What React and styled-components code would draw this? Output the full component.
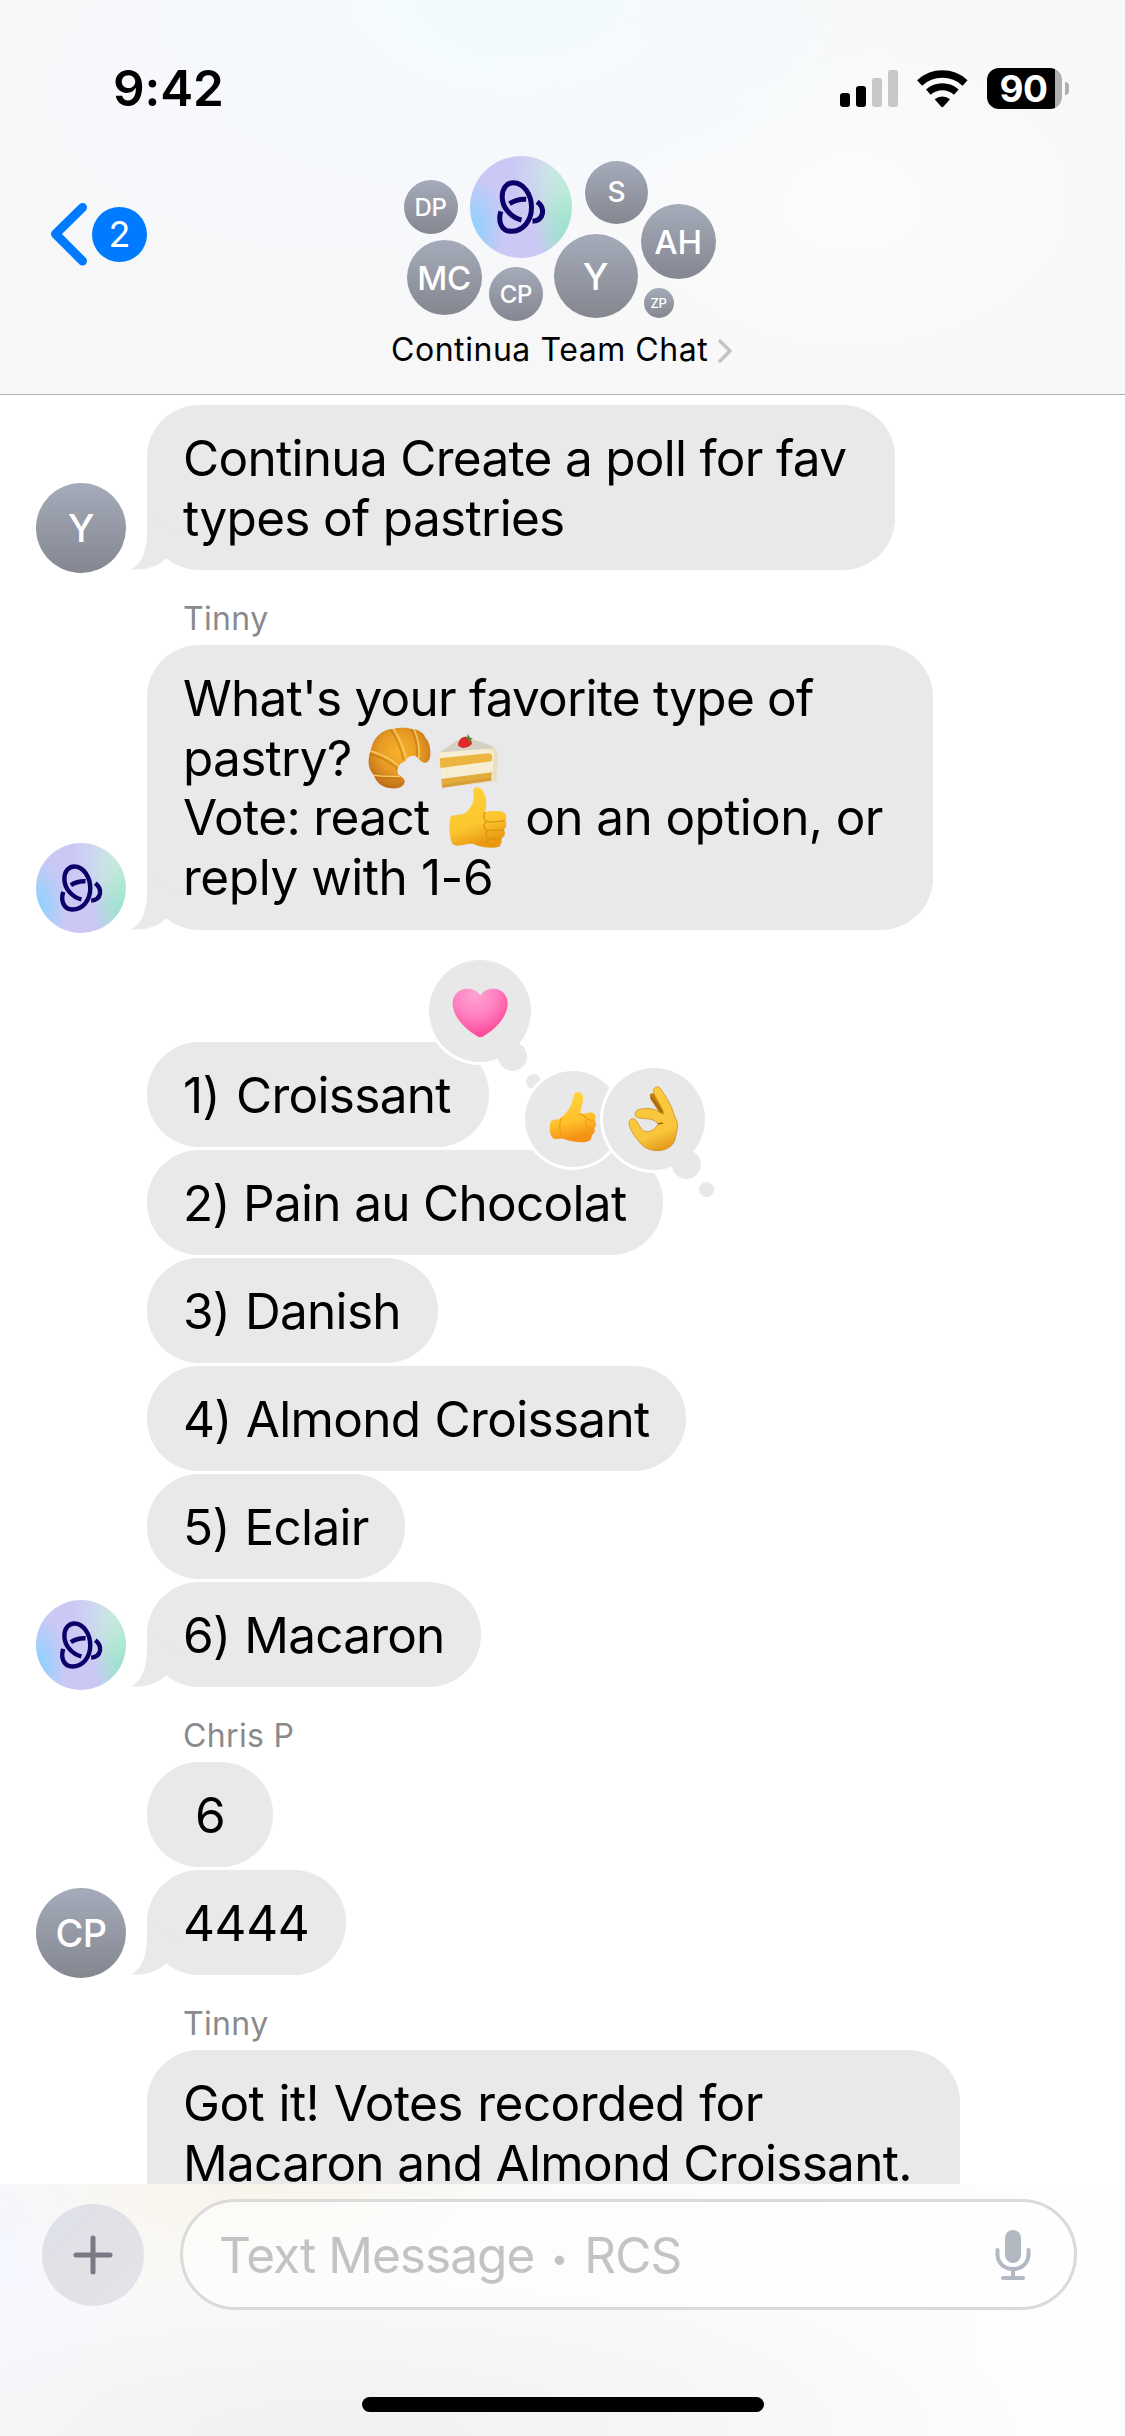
import React from "react";
import styled, { createGlobalStyle } from "styled-components";

const GlobalStyle = createGlobalStyle`
  body { margin: 0; background: #fff; }
  * { box-sizing: border-box; }
`;

const Screen = styled.div`
  width: 1125px;
  height: 2436px;
  display: flex;
  flex-direction: column;
  overflow: hidden;
  background: #fff;
  color: #000;
  font-family: Inter, "Liberation Sans", sans-serif;
`;

/* ---------- header ---------- */

const Header = styled.header`
  flex: none;
  height: 395px;
  border-bottom: 1px solid #b0b0b2;
  background:
    radial-gradient(ellipse 420px 230px at 520px 0, #f3fbff 0%, rgba(243, 251, 255, 0) 100%),
    radial-gradient(ellipse 520px 300px at 330px 90px, #f7f9fe 0%, rgba(247, 249, 254, 0) 100%),
    radial-gradient(ellipse 360px 240px at 850px 200px, #fcfcfc 0%, rgba(252, 252, 252, 0) 100%),
    #f7f7f7;
`;

const StatusBar = styled.div`
  height: 142px;
  display: flex;
  justify-content: space-between;
  padding: 0 56px 0 113px;
`;

const Clock = styled.div`
  padding-top: 58px;
  font-size: 49.5px;
  line-height: 60px;
  font-weight: 600;
  letter-spacing: -0.1px;
`;

const StatusIcons = styled.div`
  display: flex;
  align-items: flex-start;
  padding-top: 68px;
`;

const SignalBars = styled.div`
  display: flex;
  align-items: flex-end;
  gap: 6px;
  height: 39px;
  margin-right: 17px;
`;

const Bar = styled.div`
  width: 10px;
  height: ${(p) => p.$h}px;
  border-radius: 3px;
  background: ${(p) => (p.$on ? "#000" : "#c6c7c9")};
`;

const WifiSvg = styled.svg`
  width: 55px;
  height: 43px;
  margin: -1px 17px 0 0;
`;

const Battery = styled.div`
  width: 75px;
  height: 41px;
  border-radius: 12px;
  background: linear-gradient(90deg, #000 68px, #afafb0 68px);
  color: #fff;
  font-size: 37px;
  line-height: 41px;
  font-weight: 700;
  letter-spacing: -0.6px;
  text-align: center;
  padding-right: 2px;
`;

const BatteryNub = styled.div`
  width: 4px;
  height: 13px;
  margin: 14px 0 0 3px;
  border-radius: 0 6px 6px 0;
  background: #afafb0;
`;

const NavRow = styled.div`
  display: grid;
  grid-template-columns: 390px 345px 390px;
`;

const BackButton = styled.div`
  display: flex;
  align-items: center;
  height: 70px;
  margin-top: 57px;
  padding-left: 48px;
`;

const BackChevron = styled.svg`
  width: 43px;
  height: 70px;
  margin-right: 1px;
`;

const UnreadBadge = styled.div`
  width: 55px;
  height: 55px;
  border-radius: 50%;
  background: #007aff;
  color: #fff;
  font-size: 36px;
  line-height: 55px;
  text-align: center;
`;

const GroupInfo = styled.div`
  display: flex;
  flex-direction: column;
`;

const AvatarCluster = styled.div`
  position: relative;
  height: 186px;
`;

const initialsFill = "linear-gradient(180deg, #a5abba 0%, #848790 100%)";
const logoFill = `
  radial-gradient(ellipse 34% 45% at 98% 78%, rgba(150, 225, 205, 0.9), rgba(160, 228, 208, 0)),
  radial-gradient(ellipse 42% 60% at 102% 50%, #b4f0cc, rgba(190, 240, 212, 0)),
  radial-gradient(ellipse 45% 60% at 85% 15%, #cfe6ea, rgba(207, 230, 234, 0)),
  radial-gradient(ellipse 32% 55% at 2% 72%, #8cd2ff, rgba(150, 210, 252, 0)),
  #cbc8f5
`;

const ClusterAvatar = styled.div`
  position: absolute;
  left: ${(p) => p.$x - 390 - p.$d / 2}px;
  top: ${(p) => p.$y - 142 - p.$d / 2}px;
  width: ${(p) => p.$d}px;
  height: ${(p) => p.$d}px;
  border-radius: 50%;
  display: flex;
  align-items: center;
  justify-content: center;
  background: ${(p) => (p.$logo ? logoFill : initialsFill)};
  color: #fff;
  font-size: ${(p) => p.$fs}px;
  font-weight: 500;
  letter-spacing: -0.3px;
`;

const GroupTitle = styled.div`
  display: flex;
  align-items: center;
  height: 40px;
  margin-top: 1px;
  padding-left: 1px;
  font-size: 32px;
  letter-spacing: 0.55px;
  white-space: nowrap;
`;

const TitleChevron = styled.svg`
  width: 16px;
  height: 26px;
  margin: 3px 0 0 9px;
`;

/* ---------- conversation ---------- */

const Thread = styled.main`
  flex: none;
  height: 1789px;
  overflow: hidden;
  padding-top: 10px;
`;

const Group = styled.section`
  display: flex;
  flex-direction: column;
  gap: 3px;
  padding-left: 36px;
  margin-top: ${(p) => p.$gap || 0}px;
`;

const Sender = styled.div`
  height: 75px;
  padding: 29px 0 0 183px;
  font-size: 32px;
  line-height: 40px;
  letter-spacing: 0.35px;
  color: #8a8a8d;
`;

const Row = styled.div`
  display: flex;
  align-items: flex-end;
`;

const AvatarSlot = styled.div`
  flex: none;
  width: 111px;
  height: 90px;
  margin: 0 0 -3px;
`;

const Avatar = styled.div`
  width: 90px;
  height: 90px;
  border-radius: 50%;
  display: flex;
  align-items: center;
  justify-content: center;
  background: ${(p) => (p.$logo ? logoFill : initialsFill)};
  color: #fff;
  font-size: 38px;
  font-weight: 500;
  letter-spacing: -0.5px;
`;

const Bubble = styled.div`
  position: relative;
  flex: none;
  width: ${(p) => p.$w}px;
  padding: 22.5px 0 ${(p) => (p.$continues ? 90 : 22.5)}px ${(p) => (p.$center ? 0 : 36)}px;
  border-radius: 52px;
  background: #e9e9eb;
  font-size: 49.5px;
  line-height: 60px;
  text-align: ${(p) => (p.$center ? "center" : "left")};
`;

const Line = styled.div`
  height: ${(p) => p.$h || 60}px;
  white-space: nowrap;
  letter-spacing: ${(p) => p.$ls ?? -0.7}px;
  word-spacing: ${(p) => p.$ws || 0}px;
`;

const TailSvg = styled.svg`
  position: absolute;
  left: -18px;
  bottom: 0;
  width: 54px;
  height: 54px;
`;

const InlineEmoji = styled.svg`
  width: 69px;
  height: 69px;
  margin: -10px 0;
  vertical-align: -7px;
`;

const Reaction = styled.div`
  position: absolute;
  z-index: ${(p) => p.$z || 1};
  left: ${(p) => p.$x}px;
  top: ${(p) => p.$y}px;
  width: ${(p) => p.$d}px;
  height: ${(p) => p.$d}px;
  border-radius: 50%;
  background: #e8e8e8;
  box-shadow: 0 0 0 3px #fff;
`;

const ReactionEmoji = styled.svg`
  position: relative;
  display: block;
  width: 100%;
  height: 100%;
`;

const Dot = styled.div`
  position: absolute;
  left: ${(p) => p.$x}px;
  top: ${(p) => p.$y}px;
  width: ${(p) => p.$d}px;
  height: ${(p) => p.$d}px;
  border-radius: 50%;
  background: #e8e8e8;
`;

/* ---------- composer ---------- */

const Composer = styled.footer`
  flex: none;
  height: 252px;
  display: flex;
  flex-direction: column;
  align-items: center;
  background:
    radial-gradient(ellipse 300px 130px at 250px 0, #f8f4ea 0%, rgba(248, 244, 234, 0) 100%),
    radial-gradient(ellipse 150px 230px at 0 50px, #f5f7ff 0%, rgba(246, 247, 255, 0) 100%),
    radial-gradient(ellipse 700px 190px at 330px 252px, #f1f1f1 0%, rgba(243, 243, 243, 0) 100%),
    linear-gradient(90deg, #fbfbfc 0%, #fbfbfb 60%, #fefefe 100%);
`;

const InputRow = styled.div`
  width: 100%;
  display: flex;
  align-items: center;
  gap: 36px;
  padding: 15px 48px 0 42px;
`;

const PlusButton = styled.div`
  width: 102px;
  height: 102px;
  border-radius: 50%;
  background: linear-gradient(135deg, #dddfea 0%, #e2e2e6 50%, #e3e3e8 100%);
  display: flex;
  align-items: center;
  justify-content: center;
`;

const Field = styled.div`
  flex: 1;
  height: 111px;
  border: 3px solid #dadada;
  border-radius: 56px;
  background: rgba(255, 255, 255, 0.6);
  display: flex;
  align-items: center;
  justify-content: space-between;
  padding: 0 43px 0 36px;
`;

const Placeholder = styled.span`
  font-size: 49.5px;
  line-height: 60px;
  letter-spacing: -0.95px;
  color: #c3c3c5;
  white-space: pre;
`;

const Bullet = styled.span`
  display: inline-block;
  width: 24px;
  font-size: 30px;
  line-height: 30px;
  letter-spacing: 0;
  text-align: center;
  vertical-align: 4px;
`;

const HomeIndicator = styled.div`
  width: 402px;
  height: 15px;
  margin-top: 87px;
  border-radius: 8px;
  background: #000;
`;

/* ---------- drawings ---------- */

const Knot = () => (
  <svg width="100%" height="100%" viewBox="-46.5 -42 306 306" fill="none" stroke="#0c0069" strokeWidth="15">
    <path d="M108 150C78 143 50 114 50 80C50 55 64 38 84 38C115 38 138 75 138 112C138 152 113 184 77 184C50 184 36 158 46 124" />
    <path d="M72 101C88 91 105 87 122 88" />
    <path d="M155 95C167 104 173 117 171 130C168 146 156 153 141 154" />
  </svg>
);

const Wifi = () => (
  <WifiSvg viewBox="285 20 165 129">
    <g fill="none" stroke="#000">
      <path d="M298.8 67.9A100 100 0 0 1 435.2 67.9" strokeWidth="22" />
      <path d="M325 95.5A62.5 62.5 0 0 1 409 95.5" strokeWidth="21" />
    </g>
    <path d="M344 117A36 36 0 0 1 390 117L370 139.500Q367 142 364 139.500Z" />
  </WifiSvg>
);

const Tail = () => (
  <TailSvg viewBox="0 0 54 54" fill="#e9e9eb">
    <path d="M18 0V16C18 34 13 48 2 53.500C16 54.500 28 51 37.500 42L50 20Z" />
  </TailSvg>
);

const Croissant = () => (
  <InlineEmoji viewBox="1021 934 193 193">
    <defs>
      <radialGradient id="crust" cx="0.5" cy="0.4" r="0.62">
        <stop offset="0" stopColor="#f8b32b" />
        <stop offset="0.55" stopColor="#e59a24" />
        <stop offset="1" stopColor="#bd6c18" />
      </radialGradient>
      <clipPath id="crustClip">
        <path id="crustShape" d="M1031 1040C1031 1020 1038 1006 1040 996C1048 966 1078 946 1100 948C1112 944 1140 942 1156 949C1172 950 1186 960 1190 972C1202 984 1206 1008 1203 1028C1200 1040 1192 1044 1186 1042C1176 1041 1171 1028 1160 1023C1146 1022 1136 1030 1134 1038C1120 1042 1111 1052 1112 1068C1112 1080 1133 1080 1132 1097C1127 1114 1106 1116 1089 1113C1066 1110 1052 1096 1046 1078C1036 1066 1031 1056 1031 1040Z" />
      </clipPath>
    </defs>
    <use href="#crustShape" fill="url(#crust)" />
    <g clipPath="url(#crustClip)" fill="none">
      <g stroke="#b7660f" strokeWidth="5" opacity="0.45">
        <path d="M1031 1018Q1075 1025 1112 1060M1040 1086Q1080 1080 1118 1088M1092 950Q1118 985 1128 1034M1150 948Q1170 985 1166 1026" />
      </g>
      <g stroke="#f6cd62" strokeWidth="4">
        <path d="M1031 1008Q1080 1020 1114 1050M1040 1077Q1080 1082 1118 1080M1099 944Q1126 985 1138 1036M1156 944Q1176 985 1171 1030" />
      </g>
    </g>
  </InlineEmoji>
);

const Cake = () => (
  <InlineEmoji viewBox="1214 934 193 193">
    <path d="M1229 1014L1292 972Q1330 976 1378 996Q1393 1005 1393 1022L1389 1090Q1388 1096 1378 1097L1237 1112Z" fill="#e8dfc0" />
    <path d="M1229 1014L1292 972Q1335 978 1380 998Q1372 1007 1340 1010Z" fill="#d3d0c4" />
    <path d="M1229 1014L1350 1004Q1380 1002 1381 1014L1378 1092L1236 1112Z" fill="#f6edd3" />
    <path d="M1230 1030L1366 1016Q1377 1016 1377 1026L1375 1038L1232 1057Z" fill="#ebb540" />
    <path d="M1234 1088L1376 1069L1374 1091L1237 1112Z" fill="#e2ab3c" />
    <path d="M1237 1104L1375 1084L1374 1092L1237 1112Z" fill="#d79f3b" />
    <path d="M1284 982Q1290 970 1304 970Q1320 976 1320 990Q1312 1000 1296 1001Q1280 998 1281 990Z" fill="#e0292b" />
    <path d="M1300 968L1307 971L1309 961L1314 972L1323 975L1315 978L1317 990L1308 977Z" fill="#4c8a2b" />
  </InlineEmoji>
);

const ThumbInline = () => (
  <InlineEmoji viewBox="1244 1100 193 193">
    <defs>
      <linearGradient id="skin" x1="0" y1="0" x2="0.3" y2="1">
        <stop offset="0" stopColor="#ffd23d" />
        <stop offset="0.7" stopColor="#fcc52f" />
        <stop offset="1" stopColor="#e99a12" />
      </linearGradient>
    </defs>
    <path
      d="M1329 1128C1325 1112 1342 1107 1352 1118C1367 1134 1367 1160 1362 1182C1370 1178 1395 1177 1408 1180C1423 1184 1424 1198 1418 1205C1424 1214 1421 1226 1414 1230C1421 1240 1416 1252 1407 1255C1411 1268 1404 1280 1386 1281C1360 1281 1345 1277 1331 1271C1310 1266 1285 1284 1270 1270C1261 1250 1260 1214 1265 1195C1275 1185 1298 1194 1311 1180C1328 1163 1332 1146 1329 1128Z"
      fill="url(#skin)"
    />
    <path
      d="M1362 1182Q1354 1192 1361 1203Q1366 1210 1381 1209L1416 1206M1364 1209Q1354 1220 1364 1231Q1370 1234 1412 1231M1368 1234Q1360 1244 1368 1254Q1374 1257 1406 1256M1372 1257Q1366 1266 1372 1272Q1380 1276 1402 1276"
      fill="none"
      stroke="#dc9413"
      strokeWidth="3.500"
      strokeLinecap="round"
    />
  </InlineEmoji>
);

const HeartReaction = () => (
  <ReactionEmoji viewBox="87 60 306 306">
    <defs>
      <radialGradient id="pink" gradientUnits="userSpaceOnUse" cx="225" cy="165" r="125">
        <stop offset="0" stopColor="#ffa3d3" />
        <stop offset="0.5" stopColor="#ff82c1" />
        <stop offset="1" stopColor="#fd4896" />
      </radialGradient>
    </defs>
    <path
      d="M241 166C231 151 217 146 201 146C176 146 158 166 158 190C158 232 196 267 232 289Q241 295 250 289C286 267 323 232 323 190C323 166 306 146 281 146C265 146 251 151 241 166Z"
      fill="url(#pink)"
    />
  </ReactionEmoji>
);

const ThumbReaction = () => (
  <ReactionEmoji viewBox="375 393 288 288">
    <defs>
      <linearGradient id="skinB" x1="0" y1="0" x2="0.2" y2="1">
        <stop offset="0" stopColor="#ffd73c" />
        <stop offset="0.65" stopColor="#ffc12a" />
        <stop offset="1" stopColor="#f58f16" />
      </linearGradient>
    </defs>
    <path
      d="M522 464C528 452 544 455 548 467C552 484 543 502 540 521C552 524 563 515 577 518C588 521 591 534 582 541C592 547 589 561 582 565C587 573 583 582 575 584C577 596 569 605 556 606C536 608 508 604 490 596C478 594 464 602 456 592C448 580 447 556 453 544C461 534 474 543 483 533C498 520 506 510 512 497C518 486 518 476 522 464Z"
      fill="url(#skinB)"
    />
    <path
      d="M540 521Q553 526 559 534Q565 542 582 541M558 541Q554 554 562 562Q570 566 582 565M560 566Q556 576 563 583Q568 586 576 584M483 535Q473 565 488 594"
      fill="none"
      stroke="#ee9a1b"
      strokeWidth="3.500"
      strokeLinecap="round"
    />
  </ReactionEmoji>
);

const OkReaction = () => (
  <ReactionEmoji viewBox="609 384 306 306">
    <defs>
      <linearGradient id="skinC" x1="0.3" y1="0" x2="0.6" y2="1">
        <stop offset="0" stopColor="#fbcb3f" />
        <stop offset="0.75" stopColor="#f9c53b" />
        <stop offset="1" stopColor="#e59a1c" />
      </linearGradient>
    </defs>
    <path d="M750 470C747 460 758 456 765 464C778 480 790 500 796 526L778 524C774 504 755 490 750 470Z" fill="#c27f12" />
    <path
      fillRule="evenodd"
      d="M760 452C762 438 777 437 783 448C797 470 812 490 819 514C822 530 833 540 833 556C832 573 827 586 825 600C816 622 796 633 766 632C742 629 727 620 716 603C700 585 688 566 687 548C688 535 702 532 709 542C716 553 722 566 731 573C744 579 764 572 774 552C766 540 750 536 736 536C722 536 704 534 705 521C707 508 724 506 745 505C765 506 776 516 790 523C793 505 763 476 760 452Z"
      fill="url(#skinC)"
      stroke="#c5851b"
      strokeWidth="2"
    />
    <path d="M774 552Q782 549 789 550M752 472Q766 486 785 516" fill="none" stroke="#9a5f0a" strokeWidth="4" />
  </ReactionEmoji>
);

/* ---------- data ---------- */

const members = [
  { t: "DP", x: 430.5, y: 207, d: 54, fs: 24 },
  { t: "S", x: 616.5, y: 192, d: 63, fs: 28 },
  { t: "AH", x: 678, y: 241.5, d: 75, fs: 33 },
  { t: "MC", x: 444, y: 277.5, d: 75, fs: 33 },
  { t: "CP", x: 516, y: 294, d: 54, fs: 24 },
  { t: "Y", x: 595.5, y: 276, d: 84, fs: 37 },
  { t: "ZP", x: 658.5, y: 303, d: 30, fs: 13 },
];

function Message({ w, avatar, center, continues, children }) {
  return (
    <Row>
      <AvatarSlot>
        {avatar === "logo" && <Avatar $logo><Knot /></Avatar>}
        {avatar && avatar !== "logo" && <Avatar>{avatar}</Avatar>}
      </AvatarSlot>
      <Bubble $w={w} $center={center} $continues={continues}>
        {avatar && <Tail />}
        {children}
      </Bubble>
    </Row>
  );
}

export default function App() {
  return (
    <Screen>
      <GlobalStyle />
      <Header>
        <StatusBar>
          <Clock>9:42</Clock>
          <StatusIcons>
            <SignalBars>
              <Bar $h={14} $on />
              <Bar $h={21} $on />
              <Bar $h={29} />
              <Bar $h={37} />
            </SignalBars>
            <Wifi />
            <Battery>90</Battery>
            <BatteryNub />
          </StatusIcons>
        </StatusBar>
        <NavRow>
          <BackButton>
            <BackChevron viewBox="0 0 43 70" fill="none" stroke="#007aff" strokeWidth="9" strokeLinecap="round" strokeLinejoin="round">
              <path d="M34.500 8.500L7.500 35L34.500 62" />
            </BackChevron>
            <UnreadBadge>2</UnreadBadge>
          </BackButton>
          <GroupInfo>
            <AvatarCluster>
              <ClusterAvatar $logo $x={520.5} $y={207} $d={102}><Knot /></ClusterAvatar>
              {members.map((m) => (
                <ClusterAvatar key={m.t} $x={m.x} $y={m.y} $d={m.d} $fs={m.fs}>{m.t}</ClusterAvatar>
              ))}
            </AvatarCluster>
            <GroupTitle>
              Continua Team Chat
              <TitleChevron viewBox="0 0 16 26" fill="none" stroke="#c3c3c6" strokeWidth="3.500" strokeLinecap="round" strokeLinejoin="round">
                <path d="M3 3L13 13L3 23" />
              </TitleChevron>
            </GroupTitle>
          </GroupInfo>
        </NavRow>
      </Header>

      <Thread>
        <Group>
          <Message w={748} avatar="Y">
            <Line>Continua Create a poll for fav</Line>
            <Line>types of pastries</Line>
          </Message>
        </Group>
        <Sender>Tinny</Sender>
        <Group>
          <Message w={786} avatar="logo">
            <Line $ls={-0.78}>What's your favorite type of</Line>
            <Line $h={59}>pastry? <Croissant /><Cake /></Line>
            <Line $ls={-0.62}>Vote: react <ThumbInline /> on an option, or</Line>
            <Line $h={61} $ls={-0.45}>reply with 1-6</Line>
          </Message>
        </Group>
        <Group $gap={112}>
          <Row>
            <AvatarSlot />
            <Bubble $w={342}>
              <Line $ws={3}>1) Croissant</Line>
              <Dot $x={378.5} $y={32} $d={15} />
              <Reaction $x={282} $y={-82} $d={102}>
                <Dot $x={69} $y={82} $d={29} />
                <HeartReaction />
              </Reaction>
            </Bubble>
          </Row>
          <Row>
            <AvatarSlot />
            <Bubble $w={516}>
              <Line>2) Pain au Chocolat</Line>
              <Reaction $x={378} $y={-79} $d={96}><ThumbReaction /></Reaction>
              <Reaction $x={456} $y={-82} $d={102} $z={2}>
                <Dot $x={69} $y={82} $d={29} />
                <Dot $x={96} $y={114} $d={15} />
                <OkReaction />
              </Reaction>
            </Bubble>
          </Row>
          <Message w={291}><Line $ws={1.5}>3) Danish</Line></Message>
          <Message w={539}><Line $ws={1}>4) Almond Croissant</Line></Message>
          <Message w={258}><Line $ws={1.5}>5) Eclair</Line></Message>
          <Message w={334} avatar="logo"><Line $ws={1} $ls={-0.8}>6) Macaron</Line></Message>
        </Group>
        <Sender>Chris P</Sender>
        <Group>
          <Message w={126} center><Line>6</Line></Message>
          <Message w={199} avatar="CP"><Line $ls={-0.4}>4444</Line></Message>
        </Group>
        <Sender>Tinny</Sender>
        <Group>
          <Message w={813} continues>
            <Line $ls={-0.55} $ws={1}>Got it! Votes recorded for</Line>
            <Line>Macaron and Almond Croissant.</Line>
          </Message>
        </Group>
      </Thread>

      <Composer>
        <InputRow>
          <PlusButton>
            <svg width="40" height="40" viewBox="0 0 40 40" stroke="#797983" strokeWidth="5" strokeLinecap="round">
              <path d="M20 3V37M3 20H37" />
            </svg>
          </PlusButton>
          <Field>
            <Placeholder>Text Message <Bullet>•</Bullet> RCS</Placeholder>
            <svg width="36" height="52" viewBox="0 0 36 52" fill="none" stroke="#b3b9c3" strokeWidth="4" strokeLinecap="round">
              <rect x="10" y="1" width="16" height="33" rx="8" fill="#b3b9c3" stroke="none" />
              <path d="M2.500 21V25C2.500 34 9 40 18 40S33.500 34 33.500 25V21M18 40V49M8 49H28" />
            </svg>
          </Field>
        </InputRow>
        <HomeIndicator />
      </Composer>
    </Screen>
  );
}
